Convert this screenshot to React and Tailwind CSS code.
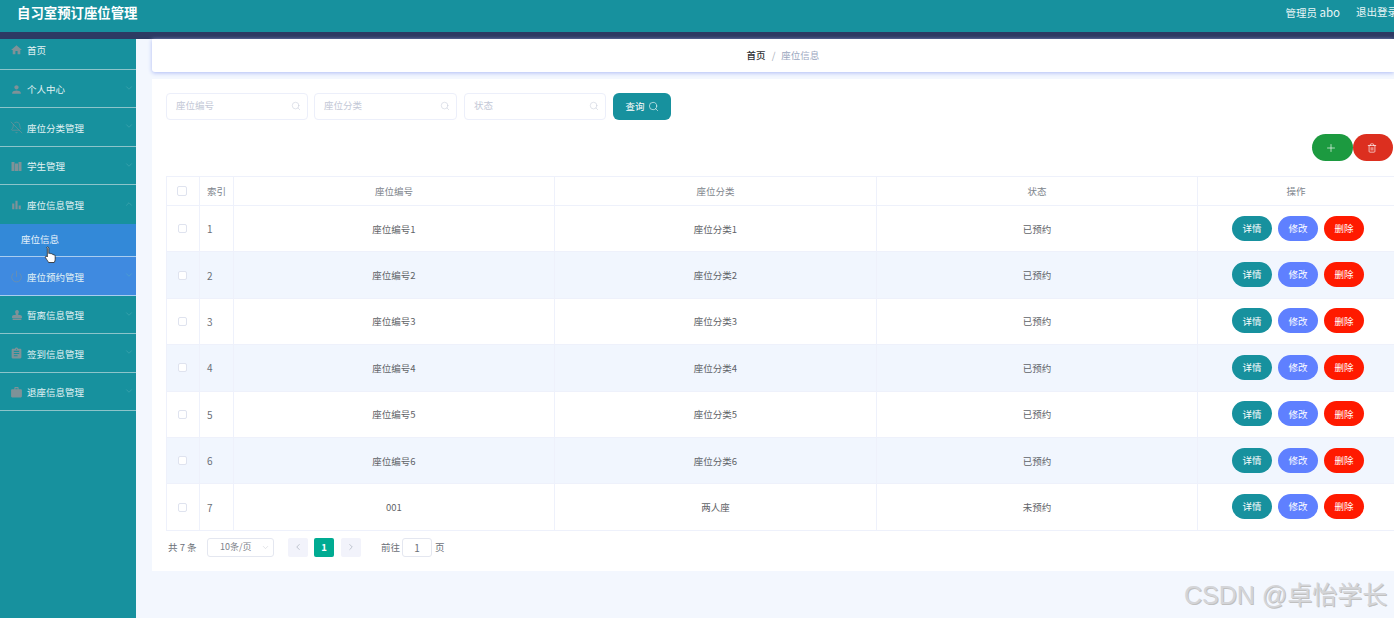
import { Search, ChevronDown, ChevronUp, ChevronLeft, ChevronRight, Plus, Trash2, BellOff, Power } from 'lucide-react'
import { MdHome, MdPerson, MdBarChart, MdAssignment, MdWork } from 'react-icons/md'
import { FaStamp } from 'react-icons/fa'

const font = { fontFamily: '"Noto Sans CJK SC", "Liberation Sans", sans-serif' }

// the book icon of 学生管理 has no close match in the packages
const BookIcon = () => (
  <svg width="11" height="11" viewBox="0 0 11 11" fill="currentColor">
    <rect x="0.500" y="1" width="3" height="9" />
    <rect x="4" y="2.500" width="3" height="7.500" />
    <rect x="7.500" y="1" width="3" height="9" />
  </svg>
)

const menu = [
  { label: '首页', icon: <MdHome size={14} />, first: true, noArrow: true },
  { label: '个人中心', icon: <MdPerson size={15} /> },
  { label: '座位分类管理', icon: <BellOff size={13} strokeWidth={1.1} /> },
  { label: '学生管理', icon: <BookIcon /> },
  { label: '座位信息管理', icon: <MdBarChart size={14} />, open: true },
  { label: '座位预约管理', icon: <Power size={13} strokeWidth={1.1} />, hover: true },
  { label: '暂离信息管理', icon: <FaStamp size={10} /> },
  { label: '签到信息管理', icon: <MdAssignment size={13} /> },
  { label: '退座信息管理', icon: <MdWork size={13} /> },
]

const rows = [
  ['1', '座位编号1', '座位分类1', '已预约'],
  ['2', '座位编号2', '座位分类2', '已预约'],
  ['3', '座位编号3', '座位分类3', '已预约'],
  ['4', '座位编号4', '座位分类4', '已预约'],
  ['5', '座位编号5', '座位分类5', '已预约'],
  ['6', '座位编号6', '座位分类6', '已预约'],
  ['7', '001', '两人座', '未预约'],
]

const cols = 'grid grid-cols-[33px_34px_321px_322px_321px_197px]'
const cell = 'flex items-center justify-center border-r border-[#eef1fb]'

function SideItem({ item }) {
  return (
    <>
      <div className={`flex items-center pl-[10px] pr-[2px] text-[9.5px] text-[#e4f3f5] shrink-0 h-[38.5px]
        ${item.first ? '-mt-[8px]' : 'pt-[2px]'}
        ${item.hover ? 'bg-[#3f8ae0] border-b border-[#a9cdf0]' : item.open ? '' : 'border-b-[1.5px] border-[#8cc4ca]'}`}>
        <span className="w-[13px] flex justify-center text-[#7f9298] mr-[4px]">{item.icon}</span>
        <span className="flex-1">{item.label}</span>
        {!item.noArrow && (item.open
          ? <ChevronUp size={10} strokeWidth={1} className="text-[#5fb3bc] -mt-[3px]" />
          : <ChevronDown size={10} strokeWidth={1} className="text-[#5fb3bc] -mt-[3px]" />)}
      </div>
      {item.open && (
        <div className="h-[33.5px] pl-[21px] pb-[2px] flex items-center bg-[#3389d8] border-b border-[#a9cdf0] text-[9.5px] text-[#e9f4fc] shrink-0">
          座位信息
        </div>
      )}
    </>
  )
}

function SearchBox({ text, w }) {
  return (
    <div className={`${w} h-[27px] border border-[#eceffa] rounded-[4px] flex items-center justify-between pl-[9px] pr-[6px] pb-[2px] text-[9.5px] text-[#c3c8d6]`}>
      <span>{text}</span>
      <Search size={10} strokeWidth={1.2} className="text-[#c3c8d6]" />
    </div>
  )
}

function Pill({ bg, children }) {
  return <span className={`w-[40px] h-[25px] rounded-full ${bg} text-white text-[9.5px] flex items-center justify-center`}>{children}</span>
}

export default function App() {
  return (
    <div className="w-[1394px] h-[618px] overflow-hidden relative flex flex-col bg-[#f3f7fe]" style={font}>
      <div className="h-[32px] pb-[7px] bg-[#17919e] flex items-center justify-between shrink-0 text-white">
        <div className="pl-[17px] text-[13.4px] font-bold">自习室预订座位管理</div>
        <div className="flex text-[10.500px] text-[#e8f5f6] gap-[16px] -mr-[4px] whitespace-nowrap">
          <span><span>管理员</span> <span className="text-[11.500px]">abo</span></span>
          <span>退出登录</span>
        </div>
      </div>
      <div className="h-[7px] bg-[#2d3a63] shrink-0" />

      <div className="flex flex-1 min-h-0">
        <div className="w-[136px] bg-[#17919e] flex flex-col overflow-hidden shrink-0">
          {menu.map(m => <SideItem key={m.label} item={m} />)}
        </div>

        <div className="flex-1 min-w-0 pl-[16px]">
          <div className="h-[33px] pl-[20px] bg-white rounded-bl-[3px] shadow-[0_1px_4px_#aebcf5] flex items-center justify-center text-[9.5px]">
            <span className="text-[#303133] font-medium">首页</span>
            <span className="text-[#a8adb8] mx-[6px]">/</span>
            <span className="text-[#9aa7c0]">座位信息</span>
          </div>

          <div className="mt-[7px] h-[492px] bg-white pt-[14px] pl-[14px]">
            <div className="flex">
              <SearchBox text="座位编号" w="w-[142px] mr-[6px]" />
              <SearchBox text="座位分类" w="w-[143px] mr-[7px]" />
              <SearchBox text="状态" w="w-[142px] mr-[7px]" />
              <button className="w-[58px] h-[27px] pb-[1px] rounded-[6px] bg-[#17919e] text-white text-[9.5px] flex items-center justify-center gap-[3px]">
                查询 <Search size={11} strokeWidth={1.3} />
              </button>
            </div>

            <div className="flex justify-end mt-[14px] pr-[1px]">
              <span className="w-[41px] h-[27px] pr-[3px] rounded-full bg-[#1c9a40] text-white flex items-center justify-center"><Plus size={12} strokeWidth={1.3} /></span>
              <span className="w-[40px] h-[27px] pr-[3px] rounded-full bg-[#dc2f1f] text-white flex items-center justify-center"><Trash2 size={10} strokeWidth={1.6} /></span>
            </div>

            <div className="mt-[15px] border-t border-l border-[#eef1fb] text-[9.5px] text-[#5f6368]">
              <div className={`${cols} h-[29px] border-b border-[#eef1fb] text-[#80858d]`}>
                <div className={`${cell} pr-[2px]`}><span className="w-[10px] h-[10px] border border-[#dfe3ef] rounded-[2px]" /></div>
                <div className={cell}>索引</div>
                <div className={cell}>座位编号</div>
                <div className={cell}>座位分类</div>
                <div className={cell}>状态</div>
                <div className={cell}>操作</div>
              </div>
              {rows.map((r, i) => (
                <div key={r[0]} className={`${cols} h-[46.4px] border-b border-[#eef1fb] ${i % 2 ? 'bg-[#f1f6fe]' : 'bg-white'}`}>
                  <div className={`${cell} pr-[2px]`}><span className="w-[9px] h-[9px] border border-[#dfe3ef] bg-white rounded-[2px]" /></div>
                  <div className={`${cell} !justify-start pl-[7px] text-[10px] text-[#6b7078]`}>{r[0]}</div>
                  <div className={cell}>{r[1]}</div>
                  <div className={cell}>{r[2]}</div>
                  <div className={cell}>{r[3]}</div>
                  <div className={`${cell} gap-[6px] pl-[4px] pb-[1px]`}>
                    <Pill bg="bg-[#17919e]">详情</Pill>
                    <Pill bg="bg-[#5f80ff]">修改</Pill>
                    <Pill bg="bg-[#ff1a00]">删除</Pill>
                  </div>
                </div>
              ))}
            </div>

            <div className="flex items-center mt-[7px] h-[19px] pl-[2px] text-[9.5px] text-[#6b7078]">
              <span className="w-[39px]">共 7 条</span>
              <div className="w-[67px] h-[19px] border border-[#e4e7f0] rounded-[3px] flex items-center justify-between pl-[12px] pr-[3px] text-[#7d828a]">
                <span className="text-[9px]">10条/页</span> <ChevronDown size={9} strokeWidth={1} className="text-[#b5bac5]" />
              </div>
              <span className="w-[20px] h-[19px] ml-[14px] bg-[#f2f3fb] rounded-[2px] flex items-center justify-center text-[#b5bac5]"><ChevronLeft size={10} /></span>
              <span className="w-[20px] h-[19px] ml-[6px] bg-[#00ab92] rounded-[2px] flex items-center justify-center text-white font-bold">1</span>
              <span className="w-[20px] h-[19px] ml-[7px] bg-[#f2f3fb] rounded-[2px] flex items-center justify-center text-[#b5bac5]"><ChevronRight size={10} /></span>
              <span className="ml-[20px]">前往</span>
              <span className="w-[30px] h-[19px] ml-[2px] border border-[#e4e7f0] rounded-[3px] flex items-center justify-center text-[10px]">1</span>
              <span className="ml-[3px]">页</span>
            </div>
          </div>
        </div>
      </div>

      {/* mouse cursor */}
      <svg className="absolute left-[44px] top-[246px]" width="14" height="18" viewBox="0 0 14 18">
        <path d="M3.500 1c.8 0 1.300.6 1.300 1.300v5.200l.8-.2c.6-.1 1 .2 1.200.5.500-.3 1.200-.1 1.400.5.600-.3 1.400 0 1.500.7.800-.2 1.500.3 1.500 1.100v3.200c0 1.300-.4 2.200-1 3.200H4.600c-.6-1.300-1.500-2.300-3-4.600-.5-.8-.3-1.500.3-1.700.6-.2 1 .1 1.400.8V2.300C2.300 1.600 2.800 1 3.500 1z" fill="#fff" stroke="#222" strokeWidth=".8" />
      </svg>

      <div className="absolute left-[1184px] top-[577px] text-[25px] leading-[36px] text-[#d4d5d8] [text-shadow:1px_1px_0_#c0c0c0] whitespace-nowrap" style={{ fontFamily: '"Liberation Sans", "Noto Sans CJK SC", sans-serif' }}>
        CSDN @卓怡学长
      </div>
    </div>
  )
}
